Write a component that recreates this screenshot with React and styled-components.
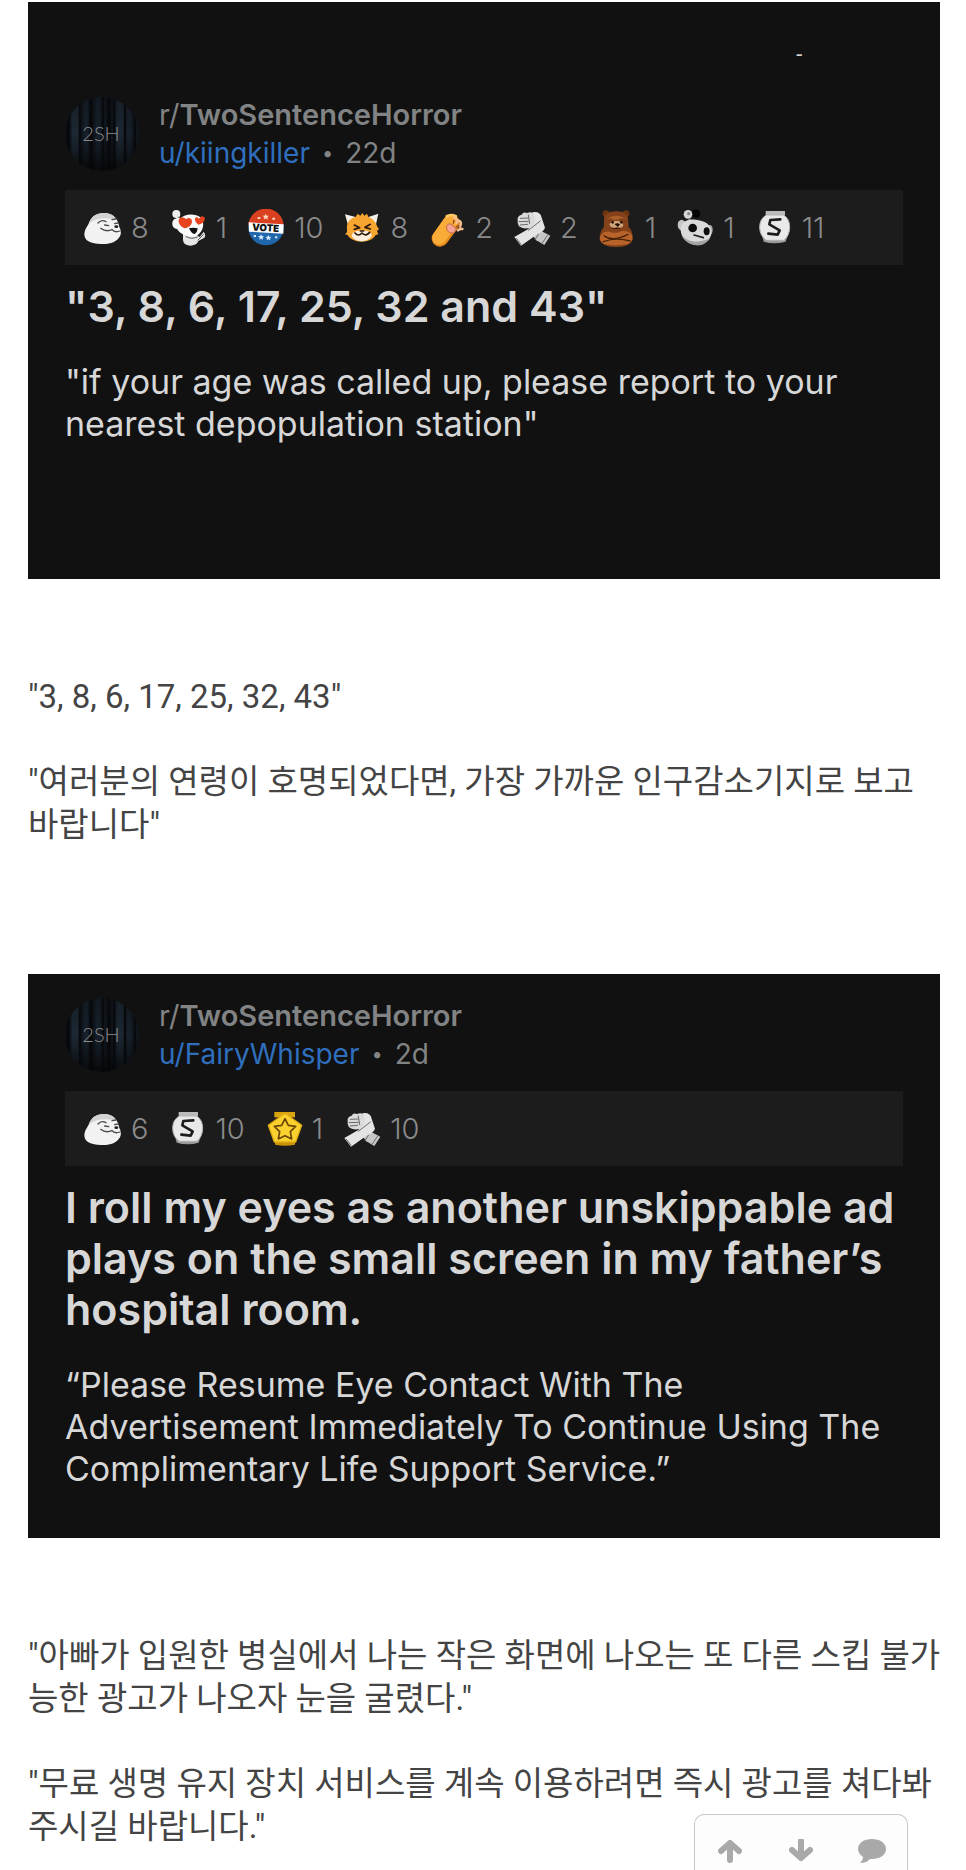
import React from "react"
import styled, { createGlobalStyle } from "styled-components"

const GlobalStyle = createGlobalStyle`
* {
    box-sizing: border-box;
}
body {
    margin: 0;
    background-color: #ffffff;
}
`

const icons = {
    seal: (
        <>
            <path d="M14 44C22 20 42 10 64 12C88 14 102 30 106 54C112 64 112 74 108 82C98 100 76 107 50 105C22 104 0 96 1 74C2 62 8 54 14 44Z" fill="#f2f2f2" />
            <path d="M14 44C22 20 42 10 64 12C78 13 92 20 99 34C70 24 36 26 14 44Z" fill="#d2d2d2" />
            <path d="M42 42Q52 30 66 38M84 32L96 30M50 58Q66 70 84 62Q92 72 108 66M92 44L102 42M62 48L74 50" fill="none" stroke="#4a4a4a" strokeWidth="4" strokeLinecap="round" />
            <ellipse cx="97" cy="53" rx="6" ry="4" fill="#222" />
        </>
    ),
    snooLove: (
        <>
            <circle cx="22" cy="15" r="12" fill="#eeeeee" />
            <path d="M28 24L36 34" stroke="#888" strokeWidth="4" />
            <path d="M42 72L42 94Q44 110 66 110Q84 108 88 96L106 86Q112 78 104 68L92 84L78 76Z" fill="#e6e6e6" />
            <path d="M10 46C8 30 24 24 34 28C48 14 78 12 96 26C108 42 104 66 84 80C60 88 34 76 24 60C16 60 10 54 10 46Z" fill="#fafafa" />
            <path d="M86 94L104 76M50 82Q66 92 86 84" stroke="#555" strokeWidth="3" fill="none" />
            <path d="M46 58C22 46 26 24 40 25Q48 26 51 31Q61 22 68 32C72 44 62 56 46 58Z" fill="#e8431f" />
            <path d="M88 47C74 36 76 23 85 25L90 29Q98 17 106 25C111 35 100 46 88 47Z" fill="#e8431f" />
            <path d="M60 58Q74 54 86 58Q84 74 75 75Q66 72 60 58Z" fill="#111" />
        </>
    ),
    vote: (
        <>
            <circle cx="57" cy="56" r="53" fill="#1f66ab" />
            <path d="M4 48A53 53 0 0 1 109 42L109 48L4 46Z" fill="#d9401f" />
            <path d="M5 40L110 46L109 74L6 68Z" fill="#ffffff" />
            <text x="56" y="67" transform="rotate(3 57 56)" textAnchor="middle" fontFamily="Inter, sans-serif" fontSize="29" fontWeight="900" fill="#111">VOTE</text>
            <path d="M56 14l3 6 7 0-5 5 2 7-7-4-6 4 2-7-6-5 7 0ZM32 24h8v6h-8ZM76 26h8v6h-8Z" fill="#ffd9bd" />
            <path d="M42 76l3 5 6 1-4 4 1 6-6-3-5 3 1-6-5-4 6-1ZM64 78l3 5 6 1-4 4 1 6-6-3-5 3 1-6-5-4 6-1ZM20 78h7v6h-7ZM84 82h7v6h-7Z" fill="#cfe8ff" />
        </>
    ),
    cat: (
        <>
            <path d="M6 16L38 24L16 52ZM106 14L76 24L98 50Z" fill="#f6efe6" />
            <path d="M12 60C10 40 22 28 38 24L44 14L52 20L58 12L64 20L72 14L76 24C92 30 100 42 102 52L108 60L102 66L106 76L98 78C90 92 74 98 56 98C36 98 20 90 14 78L6 76L12 70Z" fill="#f6a531" />
            <path d="M26 82C26 68 44 64 56 66C72 64 88 70 86 82C72 102 40 102 26 82Z" fill="#fbeedb" />
            <path d="M34 48L50 56L34 61M82 46L66 55L82 60M36 72Q46 84 57 72Q68 84 80 70M52 66L62 66" fill="none" stroke="#2b1a0c" strokeWidth="5" strokeLinecap="round" strokeLinejoin="round" />
        </>
    ),
    paw: (
        <>
            <path d="M36 88L70 42" stroke="#e58a1a" strokeWidth="50" strokeLinecap="round" />
            <path d="M34 86L66 40" stroke="#f9ad38" strokeWidth="42" strokeLinecap="round" />
            <path d="M56 22Q74 14 84 22" fill="none" stroke="#ffc766" strokeWidth="8" strokeLinecap="round" />
            <path d="M56 50Q62 40 72 48Q84 52 84 62Q80 74 68 72Q54 68 56 50Z" fill="#f3a293" stroke="#c46a3c" strokeWidth="3" />
            <path d="M78 26Q92 30 86 42M94 36Q102 40 96 52M90 64Q96 58 103 60" fill="none" stroke="#f5bd8e" strokeWidth="8" strokeLinecap="round" />
            <path d="M78 34L76 42M92 50L86 54" stroke="#8b430e" strokeWidth="4" strokeLinecap="round" />
        </>
    ),
    arms: (
        <>
            <path d="M48 66L66 56L112 80L94 108L70 94Z" fill="#c6c6c6" />
            <path d="M58 10Q82 6 86 26L96 56Q92 68 78 72L24 110L4 84L46 60L62 40Z" fill="#e4e4e4" />
            <path d="M14 34Q12 20 26 17Q30 8 42 12Q56 6 62 14L66 38L52 56Q30 62 18 52Q12 44 14 34Z" fill="#dadada" />
            <path d="M22 28L46 27M18 38L46 37M22 48L44 46M46 18L50 44M46 64L82 36M10 88L24 106M104 78L88 102M76 76L66 92" fill="none" stroke="#6a6a6a" strokeWidth="3" strokeLinecap="round" />
        </>
    ),
    bear: (
        <>
            <circle cx="24" cy="14" r="10" fill="#6e3510" />
            <circle cx="84" cy="14" r="10" fill="#6e3510" />
            <path d="M18 26Q28 6 54 7Q82 6 90 26L92 54Q106 68 104 92Q96 114 54 114Q12 114 5 92Q4 68 18 54Z" fill="#85421a" />
            <path d="M24 30Q54 10 86 30Q70 24 60 32H46Q36 24 24 30Z" fill="#aa5f2a" />
            <path d="M6 84Q14 66 34 68Q54 76 72 66Q96 64 103 82Q106 98 88 106Q54 112 20 106Q4 98 6 84Z" fill="#b8632a" />
            <path d="M18 80Q44 100 90 76M16 98Q54 84 96 96" fill="none" stroke="#4a2208" strokeWidth="4" strokeLinecap="round" />
            <path d="M34 46Q40 34 54 36Q72 34 76 48Q74 60 56 54Q40 62 34 46Z" fill="#d0a47c" />
            <path d="M50 46Q58 40 66 46L60 54ZM36 56Q54 62 70 58" fill="#241004" />
            <circle cx="44" cy="40" r="4" fill="#241004" />
            <circle cx="70" cy="40" r="4" fill="#241004" />
        </>
    ),
    snooMeh: (
        <>
            <circle cx="60" cy="14" r="13" fill="#050505" />
            <circle cx="36" cy="16" r="13" fill="#d8d8d8" />
            <circle cx="38" cy="14" r="5" fill="#8c8c8c" />
            <path d="M38 28L44 38" stroke="#888" strokeWidth="5" />
            <ellipse cx="17" cy="48" rx="12" ry="16" fill="#c4c4c4" />
            <ellipse cx="101" cy="62" rx="9" ry="14" fill="#a8a8a8" />
            <path d="M14 56C18 34 44 28 68 34C94 38 110 54 106 76C100 100 76 112 50 106C26 98 12 78 14 56Z" fill="#dadada" />
            <path d="M16 76C30 98 62 106 102 88C90 108 68 114 46 106C32 100 20 90 16 76Z" fill="#a4a4a4" />
            <ellipse cx="50" cy="57" rx="13" ry="13" fill="#0d0d0d" />
            <ellipse cx="92" cy="67" rx="9" ry="12" fill="#0d0d0d" />
            <path d="M54 78L82 86" stroke="#222" strokeWidth="5" strokeLinecap="round" />
        </>
    ),
    silver: (
        <>
            <path d="M32 6H90V18H32Z" fill="#bcbcbc" />
            <path d="M20 74H100L92 98Q58 108 26 98Z" fill="#9a9a9a" />
            <path d="M34 18H86Q104 30 104 54Q104 80 86 94H34Q14 80 14 54Q14 30 34 18Z" fill="#e9e9e9" stroke="#b4b4b4" strokeWidth="3" />
            <path d="M76 31L46 33L43 46L74 64L68 77L40 74" fill="none" stroke="#1d1d1d" strokeWidth="8" strokeLinecap="round" strokeLinejoin="round" />
        </>
    ),
    gold: (
        <>
            <path d="M28 6H90V22H28Z" fill="#d8a50e" />
            <path d="M30 88H90V104Q60 110 30 104Z" fill="#c9920a" />
            <path d="M60 10L110 46L92 96H28L10 46Z" fill="#fbd12f" stroke="#e0ac12" strokeWidth="4" strokeLinejoin="round" />
            <path d="M60 26L70 46L92 49L76 65L80 87L60 77L40 87L44 65L28 49L50 46Z" fill="#fbd12f" stroke="#6b4706" strokeWidth="5" strokeLinejoin="round" />
        </>
    )
}

const posts = [
    {
        mark: "-",
        user: "kiingkiller",
        age: "22d",
        awards: [
            ["seal", 8], ["snooLove", 1], ["vote", 10], ["cat", 8], ["paw", 2],
            ["arms", 2], ["bear", 1], ["snooMeh", 1], ["silver", 11]
        ],
        title: "\"3, 8, 6, 17, 25, 32 and 43\"",
        body: "\"if your age was called up, please report to your nearest depopulation station\"",
        translation: [
            "\"3, 8, 6, 17, 25, 32, 43\"",
            "\"여러분의 연령이 호명되었다면, 가장 가까운 인구감소기지로 보고 바랍니다\""
        ]
    },
    {
        user: "FairyWhisper",
        age: "2d",
        awards: [["seal", 6], ["silver", 10], ["gold", 1], ["arms", 10]],
        title: "I roll my eyes as another unskippable ad plays on the small screen in my father’s hospital room.",
        body: "“Please Resume Eye Contact With The Advertisement Immediately To Continue Using The Complimentary Life Support Service.”",
        translation: [
            "\"아빠가 입원한 병실에서 나는 작은 화면에 나오는 또 다른 스킵 불가능한 광고가 나오자 눈을 굴렸다.\"",
            "\"무료 생명 유지 장치 서비스를 계속 이용하려면 즉시 광고를 쳐다봐 주시길 바랍니다.\""
        ]
    }
]

const Avatar = () => (
    <AvatarPicture viewBox="0 0 74 74" role="img" aria-label="2SH">
        <defs>
            <clipPath id="round"><circle cx="37" cy="37" r="37" /></clipPath>
            <linearGradient id="night" x1="0" y1="0" x2="0" y2="1">
                <stop offset="0" stopColor="#0b0d10" stopOpacity="0.4" />
                <stop offset="0.5" stopColor="#0b0d10" stopOpacity="0" />
                <stop offset="1" stopColor="#050607" stopOpacity="0.9" />
            </linearGradient>
        </defs>
        <g clipPath="url(#round)">
            <rect width="74" height="74" fill="#10161e" />
            <path d="M10 0V74M55 0V74" stroke="#1d2833" strokeWidth="7" />
            <path d="M21 0V74M33 0V74M64 0V74" stroke="#17202a" strokeWidth="5" />
            <path d="M3 0V74M26 0V74M44 0V74" stroke="#07090c" strokeWidth="4" />
            <path d="M15 0V74M38 0V74M49 0V74M60 0V74M70 0V74" stroke="#07090c" strokeWidth="2" />
            <rect width="74" height="74" fill="url(#night)" />
        </g>
        <text x="36" y="44" textAnchor="middle" fontFamily="Lato, sans-serif" fontSize="20" fontWeight="300" fill="#8a8a8a">2SH</text>
    </AvatarPicture>
)

const Post = ({ post }) => (
    <Card>
        {post.mark && <Mark>{post.mark}</Mark>}
        <Header>
            <Avatar />
            <div>
                <Line><Sub href="#sub">r/<b>TwoSentenceHorror</b></Sub></Line>
                <Line><User href="#user">u/{post.user}</User><Dot>•</Dot>{post.age}</Line>
            </div>
        </Header>
        <Awards>
            {post.awards.map(([name, count]) => (
                <Award key={name}>
                    <svg viewBox="0 0 114 114" aria-hidden="true">{icons[name]}</svg>
                    {count}
                </Award>
            ))}
        </Awards>
        <Title>{post.title}</Title>
        <Body>{post.body}</Body>
    </Card>
)

const App = () => {
    return (
        <Page>
            <GlobalStyle />
            {posts.map((post) => (
                <React.Fragment key={post.user}>
                    <Post post={post} />
                    <Translation>
                        {post.translation.map((text) => <p key={text}>{text}</p>)}
                    </Translation>
                </React.Fragment>
            ))}
            <Toolbar>
                <button aria-label="Up">
                    <svg viewBox="0 0 24 24"><path d="M12 21V5M3 12L12 4L21 12" fill="none" stroke="#a9a9a9" strokeWidth="6" strokeLinecap="round" strokeLinejoin="round" /></svg>
                </button>
                <button aria-label="Down">
                    <svg viewBox="0 0 24 24"><path d="M12 2V18M3 11L12 19L21 11" fill="none" stroke="#a9a9a9" strokeWidth="6" strokeLinecap="round" strokeLinejoin="round" /></svg>
                </button>
                <button aria-label="Comments">
                    <svg viewBox="0 0 28 24"><path d="M14 0C22 0 28 4 28 10C28 16 22 20 14 20H12C9 23 6 24 2 24C4 22 5 20 5 18C2 16 0 13 0 10C0 4 6 0 14 0Z" fill="#a9a9a9" /></svg>
                </button>
            </Toolbar>
        </Page>
    )
}

const Page = styled.main`
padding: 2px 26px 0 28px;
`

const Card = styled.article`
padding: 23px 37px 48px;
background-color: #111111;
color: #d7d7d8;
font-family: Inter, "Liberation Sans", sans-serif;
&:first-of-type {
    padding-top: 0;
    padding-bottom: 134px;
}
`

const Mark = styled.div`
height: 94px;
padding: 42px 100px 0 0;
font-size: 16px;
font-weight: 600;
line-height: 20px;
text-align: right;
`

const Header = styled.header`
display: flex;
align-items: center;
gap: 20px;
`

const AvatarPicture = styled.svg`
width: 74px;
height: 74px;
flex: none;
`

const Line = styled.div`
display: flex;
align-items: center;
gap: 12px;
font-size: 28px;
line-height: 38px;
color: #818384;
`

const Sub = styled.a`
color: inherit;
font-size: 29px;
text-decoration: none;
b {
    font-weight: 600;
}
`

const User = styled.a`
color: #2f6fbe;
text-decoration: none;
`

const Dot = styled.span`
font-size: 20px;
`

const Awards = styled.ul`
display: flex;
align-items: center;
gap: 20px;
height: 75px;
margin: 18px 0 0;
padding: 0 19px;
list-style: none;
background-color: #1c1c1c;
`

const Award = styled.li`
display: flex;
align-items: center;
gap: 9px;
font-size: 29px;
font-weight: 300;
color: #8a8a8b;
svg {
    width: 38px;
    height: 38px;
}
`

const Title = styled.h2`
margin: 16px 0 0;
font-size: 43px;
font-weight: 600;
line-height: 51px;
`

const Body = styled.p`
margin: 29px 0 0;
font-size: 34px;
line-height: 42px;
`

const Translation = styled.section`
margin-right: -8px;
padding: 96px 0 128px;
color: #444444;
font-family: Roboto, "Noto Sans CJK KR", sans-serif;
font-size: 33px;
line-height: 43px;
word-break: break-all;
p {
    margin: 0 0 42px;
}
p:last-child {
    margin-bottom: 0;
}
&:last-of-type {
    padding-bottom: 0;
}
`

const Toolbar = styled.nav`
position: fixed;
right: 58px;
bottom: 0;
display: grid;
grid-template-columns: repeat(3, 1fr);
width: 214px;
height: 56px;
padding: 16px 0 0;
background-color: #fdfdfd;
border: 1px solid #c8c8c8;
border-bottom: none;
border-radius: 10px 10px 0 0;
button {
    padding: 4px 0 0;
    background: none;
    border: none;
    cursor: pointer;
}
svg {
    height: 24px;
}
`

export default App
